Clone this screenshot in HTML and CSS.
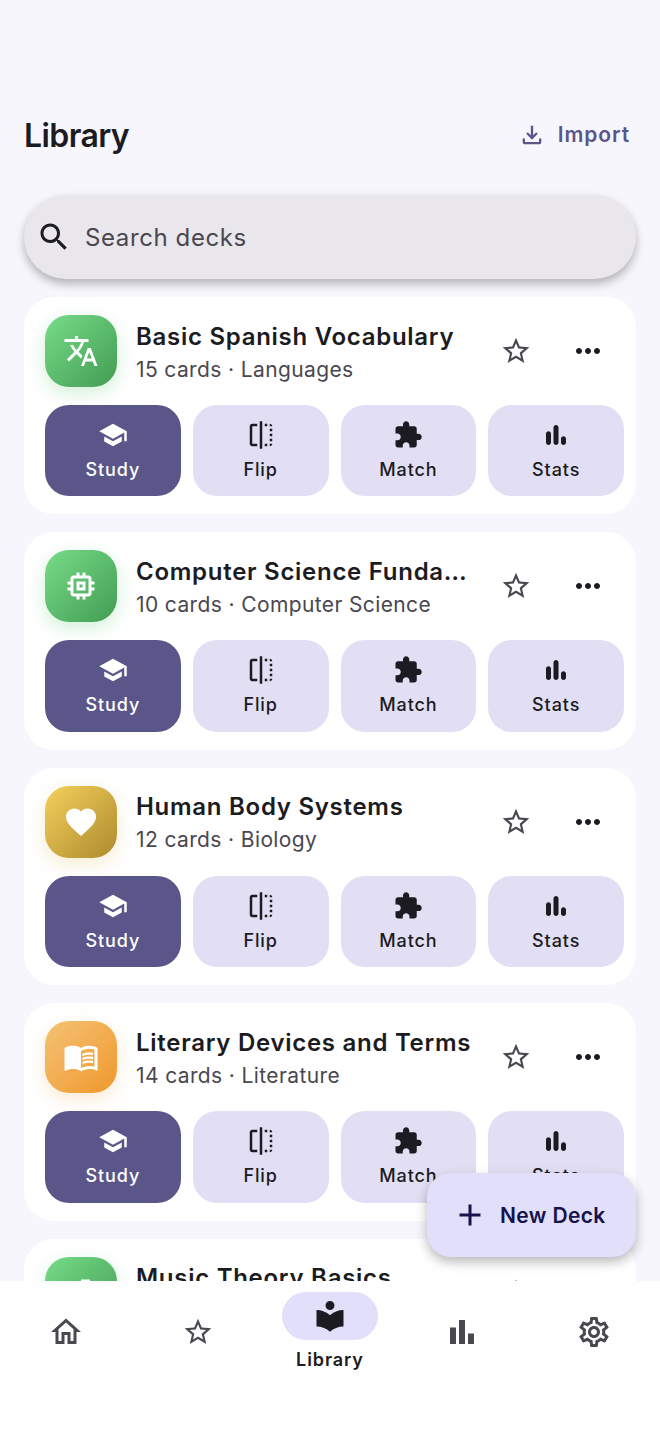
FILE: index.html
```html
<!DOCTYPE html>
<html lang="en">
<head>
<meta charset="utf-8">
<title>Library</title>
<link rel="stylesheet" href="styles.css">
</head>
<body>
<svg class="defs" aria-hidden="true">
  <symbol id="i-translate" viewBox="0 0 24 24"><path d="M12.87 15.07l-2.54-2.51.03-.03c1.74-1.94 2.98-4.17 3.71-6.53H17V4h-7V2H8v2H1v1.99h11.17C11.5 7.92 10.43 9.75 9 11.35 8.07 10.32 7.3 9.19 6.69 8h-2c.73 1.63 1.73 3.17 2.98 4.56l-5.09 5.02L4 19l5-5 3.11 3.11.76-2.04zM18.5 10h-2L12 22h2l1.12-3h4.75L21 22h2l-4.5-12zm-2.62 7l1.62-4.33L19.12 17h-3.24z"/></symbol>
  <symbol id="i-search" viewBox="0 0 24 24"><path d="M15.5 14h-.79l-.28-.27C15.41 12.59 16 11.11 16 9.5 16 5.91 13.09 3 9.5 3S3 5.91 3 9.5 5.91 16 9.5 16c1.61 0 3.09-.59 4.23-1.57l.27.28v.79l5 4.99L20.49 19l-4.99-5zm-6 0C7.01 14 5 11.99 5 9.5S7.01 5 9.5 5 14 7.01 14 9.5 11.99 14 9.5 14z"/></symbol>
  <symbol id="i-star" viewBox="0 0 24 24"><path d="M22 9.24l-7.19-.62L12 2 9.19 8.63 2 9.24l5.46 4.73L5.82 21 12 17.27 18.18 21l-1.63-7.03L22 9.24zM12 15.4l-3.76 2.27 1-4.28-3.32-2.88 4.38-.38L12 6.1l1.71 4.04 4.38.38-3.32 2.88 1 4.28L12 15.4z"/></symbol>
  <symbol id="i-more" viewBox="0 0 24 24"><path d="M6 10c-1.1 0-2 .9-2 2s.9 2 2 2 2-.9 2-2-.9-2-2-2zm12 0c-1.1 0-2 .9-2 2s.9 2 2 2 2-.9 2-2-.9-2-2-2zm-6 0c-1.1 0-2 .9-2 2s.9 2 2 2 2-.9 2-2-.9-2-2-2z"/></symbol>
  <symbol id="i-school" viewBox="0 0 24 24"><path d="M5 13.18v4L12 21l7-3.82v-4L12 17l-7-3.82zM12 3L1 9l11 6 9-4.91V17h2V9L12 3z"/></symbol>
  <symbol id="i-flip" viewBox="0 0 24 24"><path d="M15 21h2v-2h-2v2zm4-12h2V7h-2v2zM3 5v14c0 1.1.9 2 2 2h4v-2H5V5h4V3H5c-1.1 0-2 .9-2 2zm16-2v2h2c0-1.1-.9-2-2-2zm-8 20h2V1h-2v22zm8-6h2v-2h-2v2zM15 5h2V3h-2v2zm4 8h2v-2h-2v2zm0 8c1.1 0 2-.9 2-2h-2v2z"/></symbol>
  <symbol id="i-puzzle" viewBox="0 0 24 24"><path d="M20.5 11H19V7c0-1.1-.9-2-2-2h-4V3.5C13 2.12 11.88 1 10.5 1S8 2.12 8 3.5V5H4c-1.1 0-1.99.9-1.99 2v3.8H3.5c1.49 0 2.7 1.21 2.7 2.7s-1.21 2.7-2.7 2.7H2V20c0 1.1.9 2 2 2h3.8v-1.5c0-1.49 1.21-2.7 2.7-2.7 1.49 0 2.7 1.21 2.7 2.7V22H17c1.1 0 2-.9 2-2v-4h1.5c1.38 0 2.5-1.12 2.5-2.5S21.88 11 20.5 11z"/></symbol>
  <symbol id="i-stats" viewBox="0 0 24 24"><path d="M6 20c1.1 0 2-.9 2-2v-7c0-1.1-.9-2-2-2s-2 .9-2 2v7c0 1.1.9 2 2 2zm10-5v3c0 1.1.9 2 2 2s2-.9 2-2v-3c0-1.1-.9-2-2-2s-2 .9-2 2zm-6-9v12c0 1.1.9 2 2 2s2-.9 2-2V6c0-1.1-.9-2-2-2s-2 .9-2 2z"/></symbol>
  <symbol id="i-bars" viewBox="0 0 24 24"><path d="M4 9h4v11H4zM16 13h4v7h-4zM10 4h4v16h-4z"/></symbol>
  <symbol id="i-memory" viewBox="0 0 24 24"><path d="M15 9H9v6h6V9zm-2 4h-2v-2h2v2zm8-2V9h-2V7c0-1.1-.9-2-2-2h-2V3h-2v2h-2V3H9v2H7c-1.1 0-2 .9-2 2v2H3v2h2v2H3v2h2v2c0 1.1.9 2 2 2h2v2h2v-2h2v2h2v-2h2c1.1 0 2-.9 2-2v-2h2v-2h-2v-2h2zm-4 6H7V7h10v10z"/></symbol>
  <symbol id="i-heart" viewBox="0 0 24 24"><path d="M12 21.35l-1.45-1.32C5.4 15.36 2 12.28 2 8.5 2 5.42 4.42 3 7.5 3c1.74 0 3.41.81 4.5 2.09C13.09 3.81 14.76 3 16.5 3 19.58 3 22 5.42 22 8.5c0 3.78-3.4 6.86-8.55 11.54L12 21.35z"/></symbol>
  <symbol id="i-book" viewBox="0 0 24 24"><path d="M21 5c-1.11-.35-2.33-.5-3.5-.5-1.95 0-4.05.4-5.5 1.5-1.45-1.1-3.55-1.5-5.5-1.5S2.45 4.9 1 6v14.65c0 .25.25.5.5.5.1 0 .15-.05.25-.05C3.1 20.45 5.05 20 6.5 20c1.95 0 4.05.4 5.5 1.5 1.35-.85 3.8-1.5 5.5-1.5 1.65 0 3.35.3 4.75 1.05.1.05.15.05.25.05.25 0 .5-.25.5-.5V6c-.6-.45-1.25-.75-2-1zm0 13.5c-1.1-.35-2.3-.5-3.5-.5-1.7 0-4.15.65-5.5 1.5V8c1.35-.85 3.8-1.5 5.5-1.5 1.2 0 2.4.15 3.5.5v11.5z"/><path d="M17.5 10.5c.88 0 1.73.09 2.5.26V9.24c-.79-.15-1.64-.24-2.5-.24-1.7 0-3.24.29-4.5.83v1.66c1.13-.64 2.7-.99 4.5-.99zM13 12.49v1.66c1.13-.64 2.7-.99 4.5-.99.88 0 1.73.09 2.5.26V11.9c-.79-.15-1.64-.24-2.5-.24-1.7 0-3.24.3-4.5.83zM17.5 14.33c-1.7 0-3.24.29-4.5.83v1.66c1.13-.64 2.7-.99 4.5-.99.88 0 1.73.09 2.5.26v-1.52c-.79-.16-1.64-.24-2.5-.24z"/></symbol>
  <symbol id="i-note" viewBox="0 0 24 24"><path d="M12 3v10.55c-.59-.34-1.27-.55-2-.55-2.21 0-4 1.79-4 4s1.79 4 4 4 4-1.79 4-4V7h4V3h-6z"/></symbol>
  <symbol id="i-library" viewBox="0 0 24 24"><path d="M12 11.55C9.64 9.35 6.48 8 3 8v11c3.48 0 6.64 1.35 9 3.55 2.36-2.19 5.52-3.55 9-3.55V8c-3.48 0-6.64 1.35-9 3.55zM12 8c1.66 0 3-1.34 3-3s-1.34-3-3-3-3 1.34-3 3 1.34 3 3 3z"/></symbol>
  <symbol id="i-download" viewBox="0 0 24 24"><path d="M18 15v3H6v-3H4v3c0 1.1.9 2 2 2h12c1.1 0 2-.9 2-2v-3h-2zm-1-4l-1.41-1.41L13 12.17V4h-2v8.17L8.41 9.59 7 11l5 5 5-5z"/></symbol>
  <symbol id="i-add" viewBox="0 0 24 24"><path d="M19 13h-6v6h-2v-6H5v-2h6V5h2v6h6v2z"/></symbol>
  <symbol id="i-home" viewBox="0 0 24 24"><path d="M12 5.69l5 4.5V18h-2v-6H9v6H7v-7.81l5-4.5M12 3L2 12h3v8h6v-6h2v6h6v-8h3L12 3z"/></symbol>
  <symbol id="i-gear" viewBox="0 0 24 24"><path d="M19.43 12.98c.04-.32.07-.64.07-.98 0-.34-.03-.66-.07-.98l2.11-1.65c.19-.15.24-.42.12-.64l-2-3.46c-.09-.16-.26-.25-.44-.25-.06 0-.12.01-.17.03l-2.49 1c-.52-.4-1.08-.73-1.69-.98l-.38-2.65C14.46 2.18 14.25 2 14 2h-4c-.25 0-.46.18-.49.42l-.38 2.65c-.61.25-1.17.59-1.69.98l-2.49-1c-.06-.02-.12-.03-.18-.03-.17 0-.34.09-.43.25l-2 3.46c-.13.22-.07.49.12.64l2.11 1.65c-.04.32-.07.65-.07.98 0 .33.03.66.07.98l-2.11 1.65c-.19.15-.24.42-.12.64l2 3.46c.09.16.26.25.44.25.06 0 .12-.01.17-.03l2.49-1c.52.4 1.08.73 1.69.98l.38 2.65c.03.24.24.42.49.42h4c.25 0 .46-.18.49-.42l.38-2.65c.61-.25 1.17-.59 1.69-.98l2.49 1c.06.02.12.03.18.03.17 0 .34-.09.43-.25l2-3.46c.12-.22.07-.49-.12-.64l-2.11-1.65zm-1.98-1.71c.04.31.05.52.05.73 0 .21-.02.43-.05.73l-.14 1.13.89.7 1.08.84-.7 1.21-1.27-.51-1.04-.42-.9.68c-.43.32-.84.56-1.25.73l-1.06.43-.16 1.13-.2 1.35h-1.4l-.19-1.35-.16-1.13-1.06-.43c-.43-.18-.83-.41-1.23-.71l-.91-.7-1.06.43-1.27.51-.7-1.21 1.08-.84.89-.7-.14-1.13c-.03-.31-.05-.54-.05-.74s.02-.43.05-.73l.14-1.13-.89-.7-1.08-.84.7-1.21 1.27.51 1.04.42.9-.68c.43-.32.84-.56 1.25-.73l1.06-.43.16-1.13.2-1.35h1.39l.19 1.35.16 1.13 1.06.43c.43.18.83.41 1.23.71l.91.7 1.06-.43 1.27-.51.7 1.21-1.07.85-.89.7.14 1.13zM12 8c-2.21 0-4 1.79-4 4s1.79 4 4 4 4-1.79 4-4-1.79-4-4-4zm0 6c-1.1 0-2-.9-2-2s.9-2 2-2 2 .9 2 2-.9 2-2 2z"/></symbol>
</svg>

<div class="screen">
  <header class="top">
    <h1 class="page-title">Library</h1>
    <div class="import"><svg class="ic28"><use href="#i-download"/></svg><span>Import</span></div>
  </header>

  <div class="search">
    <svg class="ic36"><use href="#i-search"/></svg>
    <span class="search-text">Search decks</span>
  </div>

  <main class="list">
    <article class="card">
      <div class="card-head">
        <div class="tile green"><svg class="ic36"><use href="#i-translate"/></svg></div>
        <div class="info"><div class="name">Basic Spanish Vocabulary</div><div class="meta">15 cards · Languages</div></div>
        <div class="act star"><svg class="ic32"><use href="#i-star"/></svg></div>
        <div class="act more"><svg class="ic36"><use href="#i-more"/></svg></div>
      </div>
      <div class="btns">
        <div class="btn primary"><svg class="ic30"><use href="#i-school"/></svg><span>Study</span></div>
        <div class="btn"><svg class="ic30"><use href="#i-flip"/></svg><span>Flip</span></div>
        <div class="btn"><svg class="ic30"><use href="#i-puzzle"/></svg><span>Match</span></div>
        <div class="btn"><svg class="ic30"><use href="#i-stats"/></svg><span>Stats</span></div>
      </div>
    </article>

    <article class="card">
      <div class="card-head">
        <div class="tile green"><svg class="ic36"><use href="#i-memory"/></svg></div>
        <div class="info"><div class="name">Computer Science Fundamentals</div><div class="meta">10 cards · Computer Science</div></div>
        <div class="act star"><svg class="ic32"><use href="#i-star"/></svg></div>
        <div class="act more"><svg class="ic36"><use href="#i-more"/></svg></div>
      </div>
      <div class="btns">
        <div class="btn primary"><svg class="ic30"><use href="#i-school"/></svg><span>Study</span></div>
        <div class="btn"><svg class="ic30"><use href="#i-flip"/></svg><span>Flip</span></div>
        <div class="btn"><svg class="ic30"><use href="#i-puzzle"/></svg><span>Match</span></div>
        <div class="btn"><svg class="ic30"><use href="#i-stats"/></svg><span>Stats</span></div>
      </div>
    </article>

    <article class="card">
      <div class="card-head">
        <div class="tile yellow"><svg class="ic36"><use href="#i-heart"/></svg></div>
        <div class="info"><div class="name">Human Body Systems</div><div class="meta">12 cards · Biology</div></div>
        <div class="act star"><svg class="ic32"><use href="#i-star"/></svg></div>
        <div class="act more"><svg class="ic36"><use href="#i-more"/></svg></div>
      </div>
      <div class="btns">
        <div class="btn primary"><svg class="ic30"><use href="#i-school"/></svg><span>Study</span></div>
        <div class="btn"><svg class="ic30"><use href="#i-flip"/></svg><span>Flip</span></div>
        <div class="btn"><svg class="ic30"><use href="#i-puzzle"/></svg><span>Match</span></div>
        <div class="btn"><svg class="ic30"><use href="#i-stats"/></svg><span>Stats</span></div>
      </div>
    </article>

    <article class="card">
      <div class="card-head">
        <div class="tile orange"><svg class="ic36"><use href="#i-book"/></svg></div>
        <div class="info"><div class="name">Literary Devices and Terms</div><div class="meta">14 cards · Literature</div></div>
        <div class="act star"><svg class="ic32"><use href="#i-star"/></svg></div>
        <div class="act more"><svg class="ic36"><use href="#i-more"/></svg></div>
      </div>
      <div class="btns">
        <div class="btn primary"><svg class="ic30"><use href="#i-school"/></svg><span>Study</span></div>
        <div class="btn"><svg class="ic30"><use href="#i-flip"/></svg><span>Flip</span></div>
        <div class="btn"><svg class="ic30"><use href="#i-puzzle"/></svg><span>Match</span></div>
        <div class="btn"><svg class="ic30"><use href="#i-stats"/></svg><span>Stats</span></div>
      </div>
    </article>

    <article class="card">
      <div class="card-head">
        <div class="tile green"><svg class="ic36"><use href="#i-note"/></svg></div>
        <div class="info"><div class="name">Music Theory Basics</div><div class="meta">8 cards · Music</div></div>
        <div class="act star"><svg class="ic32"><use href="#i-star"/></svg></div>
        <div class="act more"><svg class="ic36"><use href="#i-more"/></svg></div>
      </div>
    </article>
  </main>

  <div class="fab"><svg class="ic36"><use href="#i-add"/></svg><span>New Deck</span></div>

  <nav class="nav">
    <div class="tab"><div class="pill"><svg class="ic36"><use href="#i-home"/></svg></div></div>
    <div class="tab"><div class="pill"><svg class="ic32"><use href="#i-star"/></svg></div></div>
    <div class="tab active"><div class="pill"><svg class="ic36"><use href="#i-library"/></svg></div><span>Library</span></div>
    <div class="tab"><div class="pill"><svg class="ic36"><use href="#i-bars"/></svg></div></div>
    <div class="tab"><div class="pill"><svg class="ic36"><use href="#i-gear"/></svg></div></div>
  </nav>
</div>
</body>
</html>
```
FILE: styles.css
```css
* { box-sizing: border-box; }
html, body { margin: 0; padding: 0; }
body { font-family: Inter, "Liberation Sans", sans-serif; background: #f7f6fc; color: #1c1b21; }
svg { fill: currentColor; display: block; flex: none; }
.defs { position: absolute; width: 0; height: 0; overflow: hidden; }
.ic28 { width: 28px; height: 28px; }
.ic30 { width: 30px; height: 30px; }
.ic32 { width: 32px; height: 32px; }
.ic36 { width: 36px; height: 36px; }

.screen { position: relative; width: 660px; height: 1434px; display: flex; flex-direction: column; overflow: hidden; }

.top { height: 195px; padding: 84px 30px 7px 24px; display: flex; justify-content: space-between; align-items: center; flex: none; }
.page-title { margin: 0; font-size: 32px; line-height: 52px; font-weight: 600; letter-spacing: -0.6px; }
.import { display: flex; align-items: center; gap: 12px; color: #5b5689; font-size: 21px; line-height: 50px; font-weight: 600; letter-spacing: 0.9px; padding-bottom: 2px; }

.search { flex: none; margin: 0 24px; height: 84px; border-radius: 42px; background: #e9e6ec; display: flex; align-items: center; padding-left: 12px; gap: 13px; box-shadow: 0 5px 10px rgba(0, 0, 0, 0.28); position: relative; z-index: 1; }
.search-text { font-size: 24px; letter-spacing: 0.6px; color: #4a4750; }

.list { flex: 1; min-height: 0; overflow: hidden; margin-top: 18px; padding: 0 24px; display: flex; flex-direction: column; gap: 18px; }
.card { flex: none; height: 217.4px; background: #fff; border-radius: 30px; padding: 18px 12px 18px 21px; display: flex; flex-direction: column; gap: 18px; }
.card-head { display: flex; align-items: center; height: 72px; flex: none; }
.tile { width: 72px; height: 72px; border-radius: 24px; flex: none; display: flex; align-items: center; justify-content: center; color: #fff; margin-right: 19px; }
.green { background: linear-gradient(135deg, #77dc89, #429c52); box-shadow: 0 6px 18px rgba(90, 200, 110, 0.28); }
.yellow { background: linear-gradient(135deg, #f4d05c, #ae8a2e); box-shadow: 0 6px 18px rgba(220, 180, 70, 0.25); }
.orange { background: linear-gradient(135deg, #f5c275, #ef982c); box-shadow: 0 6px 18px rgba(240, 170, 80, 0.25); }
.info { flex: 1; min-width: 0; padding-top: 4px; }
.name { font-size: 24px; line-height: 32px; font-weight: 600; letter-spacing: 0.72px; white-space: nowrap; overflow: hidden; text-overflow: ellipsis; }
.meta { font-size: 21px; line-height: 33px; letter-spacing: 0.38px; color: #4a4750; white-space: nowrap; }
.act { width: 72px; height: 72px; flex: none; display: flex; align-items: center; justify-content: center; color: #4a4750; }
.act.more { color: #1c1b21; }

.btns { display: grid; grid-template-columns: repeat(4, 1fr); gap: 12px; flex: none; }
.btn { height: 91.4px; border-radius: 24px; background: #e2dff5; display: flex; flex-direction: column; align-items: center; padding-top: 15px; font-size: 18px; line-height: 24px; font-weight: 500; letter-spacing: 0.9px; gap: 8px; }
.btn.primary { background: #5b5689; color: #fff; }

.fab { position: absolute; left: 427px; top: 1173px; width: 209px; height: 84px; border-radius: 24px; background: #e2dffa; color: #17124a; display: flex; align-items: center; padding-left: 25px; gap: 12px; font-size: 21px; font-weight: 600; letter-spacing: 0.36px; box-shadow: 0 5px 12px rgba(0, 0, 0, 0.28); z-index: 2; }

.nav { flex: none; height: 153px; background: #fffeff; display: grid; grid-template-columns: repeat(5, 132px); position: relative; z-index: 1; }
.tab { display: flex; flex-direction: column; align-items: center; padding-top: 27px; color: #4a4750; }
.pill { width: 96px; height: 48px; border-radius: 24px; display: flex; align-items: center; justify-content: center; }
.tab.active { color: #1c1b21; font-size: 18px; font-weight: 600; letter-spacing: 0.9px; padding-top: 11px; }
.tab.active .pill { background: #e2dffa; margin-bottom: 8px; }
.tab.active span { line-height: 24px; }
```
